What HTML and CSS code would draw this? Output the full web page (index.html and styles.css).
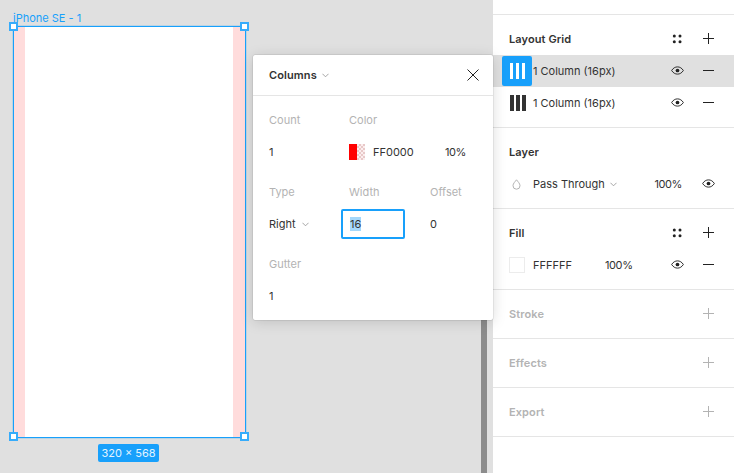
FILE: index.html
```html
<!DOCTYPE html>
<html lang="en">
<head>
<meta charset="utf-8">
<title>Layout grid</title>
<link rel="stylesheet" href="styles.css">
</head>
<body>
<div class="app">
  <main class="canvas">
    <div class="frame-label">iPhone SE - 1</div>
    <div class="frame">
      <div class="col col-left"></div>
      <div class="col col-right"></div>
      <span class="handle tl"></span><span class="handle tr"></span><span class="handle bl"></span><span class="handle br"></span>
      <div class="badge">320 × 568</div>
    </div>
    <div class="scrollbar"></div>
    <div class="popup">
      <div class="popup-head">
        <span class="popup-title">Columns</span>
        <svg class="chev chev-title" viewBox="0 0 8 5"><path d="M.5.5 4 4 7.500.5"/></svg>
        <svg class="close" viewBox="0 0 12 12"><path d="M.5.5l11 11M11.500.5l-11 11"/></svg>
      </div>
      <div class="popup-body">
        <div class="label">Count</div><div class="label">Color</div><div class="label"></div>
        <div class="value">1</div>
        <div class="value color-value">
          <span class="swatch-red"><i></i><b></b></span><span class="hex">FF0000</span><span class="pct">10%</span>
        </div>
        <div class="label">Type</div><div class="label">Width</div><div class="label">Offset</div>
        <div class="value">Right<svg class="chev chev-type" viewBox="0 0 8 5"><path d="M.5.5 4 4 7.500.5"/></svg></div>
        <div class="value"><span class="input"><span class="selected">16</span></span></div>
        <div class="value">0</div>
        <div class="label">Gutter</div><div class="label"></div><div class="label"></div>
        <div class="value">1</div>
      </div>
    </div>
  </main>
  <aside class="panel">
    <div class="panel-top"></div>
    <section class="section">
      <div class="row head"><span class="title">Layout Grid</span>
        <div class="actions">
          <span class="act"><svg class="ico" viewBox="0 0 11 11"><g class="dots"><circle cx="2.300" cy="3" r="1.500"/><circle cx="8" cy="3" r="1.500"/><circle cx="2.300" cy="8.700" r="1.500"/><circle cx="8" cy="8.700" r="1.500"/></g></svg></span>
          <span class="act"><svg class="ico" viewBox="0 0 11 11"><path class="ln" d="M5.500 0v11M0 5.500h11"/></svg></span>
        </div>
      </div>
      <div class="row grid-row active">
        <span class="grid-icon"><i></i><i></i><i></i></span><span class="name">1 Column (16px)</span>
        <div class="actions">
          <span class="act"><svg class="eye" viewBox="0 0 14 9"><path class="ln" d="M.7 4.500C2.300 1.900 4.500.6 7 .6s4.700 1.300 6.300 3.900C11.700 7.100 9.500 8.400 7 8.400S2.300 7.100.7 4.500z"/><circle class="pupil" cx="7" cy="4.500" r="2"/></svg></span>
          <span class="act"><svg class="ico" viewBox="0 0 11 11"><path class="ln" d="M0 5.500h11"/></svg></span>
        </div>
      </div>
      <div class="row grid-row">
        <span class="grid-icon"><i></i><i></i><i></i></span><span class="name">1 Column (16px)</span>
        <div class="actions">
          <span class="act"><svg class="eye" viewBox="0 0 14 9"><path class="ln" d="M.7 4.500C2.300 1.900 4.500.6 7 .6s4.700 1.300 6.300 3.900C11.700 7.100 9.500 8.400 7 8.400S2.300 7.100.7 4.500z"/><circle class="pupil" cx="7" cy="4.500" r="2"/></svg></span>
          <span class="act"><svg class="ico" viewBox="0 0 11 11"><path class="ln" d="M0 5.500h11"/></svg></span>
        </div>
      </div>
    </section>
    <section class="section">
      <div class="row head"><span class="title">Layer</span></div>
      <div class="row">
        <span class="lead"><svg class="drop" viewBox="0 0 9 11"><path d="M4.500.8C3.200 2.600 1 4.500 1 6.700a3.500 3.500 0 0 0 7 0C8 4.500 5.800 2.600 4.500.8z"/></svg></span>
        <span class="name">Pass Through</span>
        <svg class="chev chev-blend" viewBox="0 0 8 5"><path d="M.5.5 4 4 7.500.5"/></svg>
        <div class="actions">
          <span class="pct layer-pct">100%</span>
          <span class="act"><svg class="eye" viewBox="0 0 14 9"><path class="ln" d="M.7 4.500C2.300 1.900 4.500.6 7 .6s4.700 1.300 6.300 3.900C11.700 7.100 9.500 8.400 7 8.400S2.300 7.100.7 4.500z"/><circle class="pupil" cx="7" cy="4.500" r="2"/></svg></span>
        </div>
      </div>
    </section>
    <section class="section">
      <div class="row head"><span class="title">Fill</span>
        <div class="actions">
          <span class="act"><svg class="ico" viewBox="0 0 11 11"><g class="dots"><circle cx="2.300" cy="3" r="1.500"/><circle cx="8" cy="3" r="1.500"/><circle cx="2.300" cy="8.700" r="1.500"/><circle cx="8" cy="8.700" r="1.500"/></g></svg></span>
          <span class="act"><svg class="ico" viewBox="0 0 11 11"><path class="ln" d="M5.500 0v11M0 5.500h11"/></svg></span>
        </div>
      </div>
      <div class="row">
        <span class="lead"><span class="swatch-white"></span></span>
        <span class="name fill-hex">FFFFFF</span><span class="pct">100%</span>
        <div class="actions">
          <span class="act"><svg class="eye" viewBox="0 0 14 9"><path class="ln" d="M.7 4.500C2.300 1.900 4.500.6 7 .6s4.700 1.300 6.300 3.900C11.700 7.100 9.500 8.400 7 8.400S2.300 7.100.7 4.500z"/><circle class="pupil" cx="7" cy="4.500" r="2"/></svg></span>
          <span class="act"><svg class="ico" viewBox="0 0 11 11"><path class="ln" d="M0 5.500h11"/></svg></span>
        </div>
      </div>
    </section>
    <section class="section muted">
      <div class="row head"><span class="title">Stroke</span>
        <div class="actions"><span class="act"><svg class="ico" viewBox="0 0 11 11"><path class="ln" d="M5.500 0v11M0 5.500h11"/></svg></span></div>
      </div>
    </section>
    <section class="section muted">
      <div class="row head"><span class="title">Effects</span>
        <div class="actions"><span class="act"><svg class="ico" viewBox="0 0 11 11"><path class="ln" d="M5.500 0v11M0 5.500h11"/></svg></span></div>
      </div>
    </section>
    <section class="section muted">
      <div class="row head"><span class="title">Export</span>
        <div class="actions"><span class="act"><svg class="ico" viewBox="0 0 11 11"><path class="ln" d="M5.500 0v11M0 5.500h11"/></svg></span></div>
      </div>
    </section>
  </aside>
</div>
</body>
</html>
```
FILE: styles.css
```css
* { box-sizing: border-box; }
html, body { margin: 0; height: 100%; overflow: hidden; }
body {
  font-family: Inter, "Liberation Sans", sans-serif;
  font-size: 11px;
  color: #333;
  background: #e0e0e0;
}
.app { display: flex; width: 734px; height: 473px; }

/* canvas */
.canvas { position: relative; width: 493px; background: #e0e0e0; }
.frame-label {
  position: absolute; left: 13px; top: 12px;
  color: #18a0fb; font-size: 11px; line-height: 13px;
}
.frame {
  position: absolute; left: 13px; top: 26px; width: 233px; height: 412px;
  display: flex; justify-content: space-between;
  background: #fff; border: 1px solid #18a0fb;
  box-shadow: 0 0 0 1px rgba(24,160,251,.18);
}
.col { background: #ffdcdc; height: 100%; }
.col-left { width: 11px; }
.col-right { width: 12px; }
.handle {
  position: absolute; width: 9px; height: 9px;
  background: #fff; border: 2px solid #37acfb;
}
.tl { left: -5px; top: -5px; }
.tr { right: -4px; top: -5px; }
.bl { left: -5px; bottom: -4px; }
.br { right: -4px; bottom: -4px; }
.badge {
  position: absolute; left: 84px; top: 417px; width: 61px; height: 18px;
  background: #18a0fb; color: #e3f4ff; border-radius: 2px;
  font-size: 11px; line-height: 18px; text-align: center;
}
.scrollbar {
  position: absolute; left: 481px; top: 200px; bottom: 0; width: 6px;
  background: #8c8c8c;
}

/* popup */
.popup {
  position: absolute; left: 253px; top: 55px; width: 240px; height: 265px; z-index: 2;
  background: #fff; border-radius: 2px;
  box-shadow: 0 2px 14px rgba(0,0,0,.15), 0 0 0 .5px rgba(0,0,0,.12);
}
.popup-head {
  position: relative; display: flex; align-items: center;
  height: 41px; padding-left: 16px; border-bottom: 1px solid #e5e5e5;
}
.popup-title { font-weight: 600; letter-spacing: .1px; }
.chev { fill: none; stroke: #999; stroke-width: 1; width: 7px; height: 5px; flex: none; }
.chev-title { margin-left: 5px; margin-top: 1px; }
.close {
  position: absolute; right: 14px; top: 14px; width: 12px; height: 12px;
  fill: none; stroke: #222; stroke-width: 1;
}
.popup-body {
  display: grid; grid-template-columns: 80px 81px 1fr;
  grid-auto-rows: auto; padding: 12px 0 0 16px;
}
.label { height: 24px; line-height: 24px; color: #b3b3b3; margin-bottom: 4px; }
.value { height: 32px; line-height: 32px; margin-bottom: 12px; display: flex; align-items: center; }
.color-value { grid-column: 2 / 4; }
.swatch-red { display: flex; width: 16px; height: 16px; }
.swatch-red i { width: 8px; background: #ff0000; }
.swatch-red b {
  width: 8px;
  background: repeating-conic-gradient(#e8c8c8 0 25%, #fbeeee 0 50%) 0 0 / 4px 4px;
}
.hex { margin-left: 8px; width: 72px; }
.pct { letter-spacing: -.4px; }
.chev-type { margin-left: 6px; margin-top: 1px; }
.input {
  display: flex; align-items: center;
  width: 64px; height: 30px; margin-left: -8px; padding-left: 7px;
  border: 2px solid #18a0fb; border-radius: 2px;
}
.selected { background: #a5d8fb; height: 14px; line-height: 14px; }

/* right panel */
.panel { width: 241px; background: #fff; }
.panel-top { height: 15px; border-bottom: 1px solid #e5e5e5; }
.section { padding: 8px 0; border-bottom: 1px solid #e5e5e5; }
.row { display: flex; align-items: center; height: 32px; padding: 0 10px 0 16px; }
.title { font-weight: 600; letter-spacing: .1px; }
.muted .title { color: #b3b3b3; }
.muted .ln { stroke: #b3b3b3; }
.actions { margin-left: auto; display: flex; align-items: center; }
.act { width: 31px; height: 32px; display: flex; align-items: center; justify-content: center; }
.ico { width: 11px; height: 11px; margin-bottom: 1px; }
.ln { fill: none; stroke: #222; stroke-width: 1; }
.dots { fill: #222; }
.eye { width: 13px; height: 9px; margin-bottom: 1px; margin-right: 1px; }
.pupil { fill: #222; }
.grid-row { padding-left: 9px; }
.grid-row.active { background: #e0e0e0; }
.grid-icon {
  flex: none; display: flex; gap: 2px; justify-content: center; align-items: center;
  width: 30px; height: 30px; margin-right: 1px; padding-left: 1px; border-radius: 2px;
}
.grid-icon i { width: 4px; height: 16px; background: #333; }
.active .grid-icon { background: #18a0fb; gap: 3px; }
.active .grid-icon i { width: 3px; background: #fff; }
.lead { flex: none; width: 24px; height: 16px; display: flex; align-items: center; }
.drop { width: 9px; height: 11px; margin-left: 3px; fill: none; stroke: #b3b3b3; stroke-width: 1; }
.swatch-white { width: 16px; height: 16px; background: #fff; border: 1px solid #ececec; }
.chev-blend { margin-left: 5px; margin-top: 1px; }
.fill-hex { width: 72px; }
.layer-pct { margin-right: 11px; }
```
